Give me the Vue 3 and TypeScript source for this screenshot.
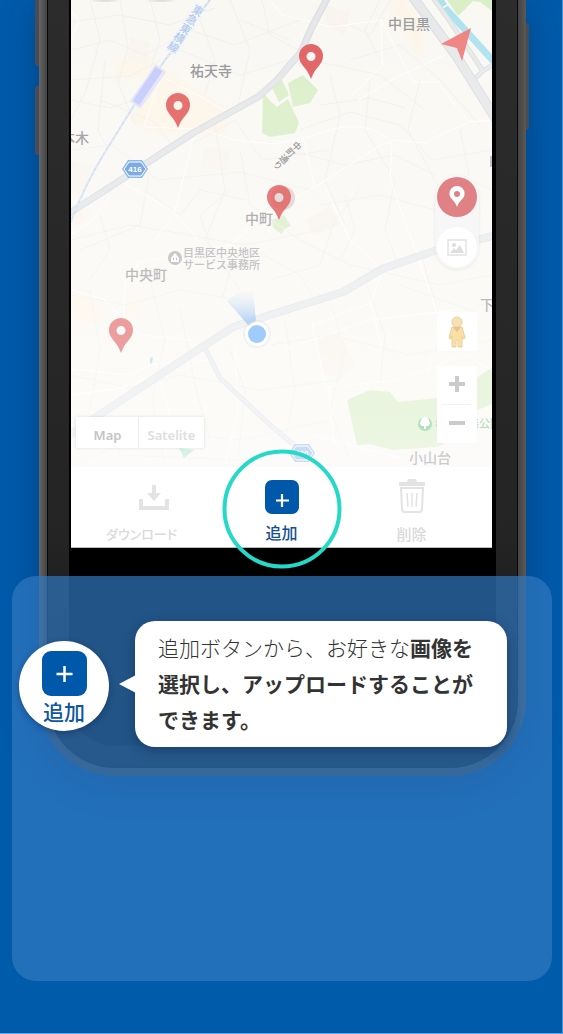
<script setup lang="ts">
interface Pin { x: number; y: number; opacity: number }
interface Label { text: string; x: number; y: number; size: number; color: string }

const pins: Pin[] = [
  { x: 178, y: 93, opacity: 0.88 },
  { x: 311, y: 44, opacity: 0.95 },
  { x: 279, y: 185, opacity: 0.82 },
  { x: 121, y: 318, opacity: 0.6 },
]

const labels: Label[] = [
  { text: '祐天寺', x: 190, y: 76, size: 14, color: '#999b9f' },
  { text: '中目黒', x: 388, y: 29, size: 14, color: '#999b9f' },
  { text: '本木', x: 61, y: 143, size: 14, color: '#a5a6a8' },
  { text: '中町', x: 245, y: 224, size: 14, color: '#b0b1b3' },
  { text: '中央町', x: 125, y: 280, size: 14, color: '#bbbcbd' },
  { text: '目黒区中央地区', x: 183, y: 257, size: 11, color: '#c3c4c5' },
  { text: 'サービス事務所', x: 183, y: 269, size: 11, color: '#c3c4c5' },
  { text: '下', x: 480, y: 310, size: 14, color: '#bbbcbd' },
  { text: '小山台', x: 409, y: 463, size: 14, color: '#cbcccd' },
  { text: '林試の森公園', x: 435, y: 428, size: 11, color: '#b9dfc1' },
]

const lanes: string[] = [
  'M71 50L110 40L145 55L190 30L235 45L300 20', 'M90 0L100 40L86 90L71 120', 'M120 0L128 48L118 82L135 125',
  'M71 80L130 76L180 50L240 75L290 60', 'M230 0L250 50L238 105', 'M262 0L270 35L320 62L380 75L425 110',
  'M71 150L112 145L158 180L240 172L310 190', 'M150 170L140 225L80 250', 'M190 145L235 120L262 160L330 150',
  'M215 125L225 190L205 240L240 290', 'M300 130L350 112L400 125L432 160L492 150', 'M330 75L340 115L325 180L345 225',
  'M370 80L365 130L395 180L385 230L400 270', 'M420 80L408 130L440 190', 'M320 205L380 195L435 210',
  'M71 240L130 225L190 235L245 245L320 230', 'M71 295L125 305L180 290L240 300', 'M90 290L100 350L90 410',
  'M150 280L165 340L152 400L165 466', 'M180 310L195 385L210 440', 'M230 350L245 390L238 460',
  'M71 375L130 388L180 375L260 390L340 380', 'M75 465L150 430L240 440L330 420', 'M285 320L295 390L285 440',
  'M330 300L345 350L330 410L350 460', 'M365 280L385 335L380 385', 'M270 345L330 335L410 355L492 340',
  'M270 280L320 265L335 220L360 190', 'M300 240L350 265L440 285L492 275', 'M420 250L440 320L430 365',
  'M460 130L470 180L492 190', 'M340 20L370 35L390 0', 'M350 60L400 45L440 80L480 125',
  'M240 150L250 205L300 240', 'M145 190L180 215L200 190L245 200', 'M100 100L155 122L175 150',
  'M255 250L300 275L320 310', 'M400 285L470 310L492 300', 'M110 405L120 455L240 460', 'M380 0L365 30L380 60',
  'M71 22L120 15L170 25L215 8', 'M150 0L160 40L150 70', 'M71 100L110 108L150 95', 'M105 60L98 130L108 150',
  'M200 20L215 60L205 95', 'M240 20L290 40', 'M320 105L370 98L405 108', 'M290 150L345 165L395 155L435 175',
  'M230 190L200 215L215 260', 'M100 215L110 250L90 280', 'M210 245L230 270L222 300', 'M345 195L355 230L340 260',
]

const avenues: string[] = [
  'M160 78L144 127L200 129L235 140L275 144L310 137Q360 115 390 140L425 143L450 130L470 122L492 120',
  'M166 79L205 99L229 113', 'M193 138L175 212L155 240', 'M120 181L174 212L198 240',
  'M270 0L282 15L333 27L381 20L413 82L438 82L457 108L470 122',
  'M381 20L382 65L352 95', 'M358 100L395 78L445 55', 'M303 137L315 187L266 214L230 245L140 262L125 282L123 330',
  'M315 187L382 144L392 142L390 180L410 235L440 320L428 373', 'M325 187L350 240L382 270L371 303L312 325L326 387L400 380L465 355L492 370',
  'M283 350L370 320L455 310', 'M371 303L382 350', 'M71 290L105 300L140 335L190 340L220 370',
  'M71 369L130 375L150 365L210 360', 'M235 340L238 410L225 466', 'M71 395L120 388L170 372', 'M160 382L175 432',
  'M310 434L400 458', 'M329 387L334 445', 'M71 10L79 22L71 40', 'M71 235L90 222L115 190',
]
</script>

<template>
  <main class="page">
    <section class="phone" aria-label="地図アプリ">
      <i class="side upper"></i><i class="side lower"></i><i class="side power"></i>
      <div class="bezel">
        <div class="screen">
          <div class="map">
            <svg class="canvas" viewBox="71 0 421 467" preserveAspectRatio="xMidYMid slice" role="img" aria-label="地図">
              <defs>
                <linearGradient id="beam" x1="0" y1="1" x2="0" y2="0">
                  <stop offset="0" stop-color="#a8ccf6" /><stop offset="1" stop-color="#d8e8f8" stop-opacity="0" />
                </linearGradient>
                <linearGradient id="haze" x1="0" y1="0" x2="0" y2="1">
                  <stop offset="0" stop-color="#fff" stop-opacity="0" /><stop offset="1" stop-color="#fff" stop-opacity=".5" />
                </linearGradient>
                <filter id="soft"><feGaussianBlur stdDeviation="3" /></filter>
              </defs>
              <rect x="71" width="421" height="467" fill="#faf8f3" />
              <g fill="#fdf5e8" filter="url(#soft)">
                <path d="M160 65L195 90L230 110L225 135L150 132L130 120Z" />
                <path d="M118 60L150 58L160 75L115 82Z" /><path d="M405 0L425 30L420 60L388 0Z" />
                <path d="M71 290L100 300L98 325L71 320Z" /><path d="M127 297L142 299L137 322L124 314Z" />
                <path d="M71 205L90 212L85 220L71 222Z" />
              </g>
              <g fill="#f9f4ee">
                <path d="M130 38L150 42L147 65L128 60Z" /><path d="M205 147L230 150L228 170L200 168Z" />
                <path d="M325 5L350 12L345 35L326 25Z" /><path d="M318 338L340 333L354 362L342 378L323 373Z" />
                <path d="M71 160L92 166L85 194L71 194Z" /><path d="M305 220L330 206L340 225L315 235Z" />
              </g>
              <g fill="#daeec8">
                <path d="M288 83L303 75L318 90L310 103L293 107Z" />
                <path d="M263 92L270 101L277 107L288 99L299 123L295 133L270 137L262 133Z" />
                <path d="M272 88L282 80L289 95L279 102Z" />
                <path d="M447 0L458 16L473 1L480 2L492 11V0Z" />
                <path d="M272 220L284 215L291 226L284 229L282 234L273 228Z" />
                <path d="M347 400L370 390L390 392L398 402L437 398L465 386L492 367V404L470 413L460 436L437 447L393 450L370 444L357 445Z" />
              </g>
              <g fill="none" stroke="#f0f1ee" stroke-width="1"><path v-for="d in lanes" :key="d" :d="d" /></g>
              <g fill="none" stroke="#fff" stroke-width="1" stroke-linejoin="round"><path v-for="d in avenues" :key="d" :d="d" /></g>
              <g fill="none" stroke-linejoin="round">
                <path d="M437 -4L447 10L496 64" stroke="#aee2ef" stroke-width="7" />
                <path d="M441 9L449 4" stroke="#f5faf8" stroke-width="2" />
                <path d="M433 -2L449 20L483 71L494 64M473 80L483 71" stroke="#dbe0e4" stroke-width="5" />
                <path d="M433 -2L449 20L483 71L494 64M473 80L483 71" stroke="#e7e9ea" stroke-width="3" />
                <path d="M412 -4L457 57L496 119" stroke="#d9dee3" stroke-width="10" />
                <path d="M412 -4L457 57L496 119" stroke="#e6e8e9" stroke-width="8" />
                <path d="M68 214L110 187L193 133L258 97L276 81L301 52L312 27L328 -3" stroke="#d8dde3" stroke-width="7" />
                <path d="M68 214L110 187L193 133L258 97L276 81L301 52L312 27L328 -3" stroke="#e4e6e7" stroke-width="5" />
                <path d="M66 438L93 419L190 355L233 327L270 315L343 292L382 269L437 250L496 235" stroke="#e0e4ea" stroke-width="8" />
                <path d="M66 438L93 419L190 355L233 327L270 315L343 292L382 269L437 250L496 235" stroke="#e8eaeb" stroke-width="6" />
                <path d="M205 348L220 378L270 425L294 445" stroke="#dfe3ea" stroke-width="5" />
                <path d="M205 348L220 378L270 425L294 445" stroke="#e9ebed" stroke-width="3" />
                <path d="M212 -3L163 63L133 107L102 157Q85 185 69 226" stroke="#cddaf1" stroke-width="2" />
                <path d="M212 -3L163 63L133 107L102 157Q85 185 69 226" stroke="#e9eef8" stroke-width="1" stroke-dasharray="3 3" />
                <path d="M135 105L161 68" stroke="#e2e4fa" stroke-width="13" /><path d="M136 103L159 69" stroke="#c4cafa" stroke-width="8" />
              </g>
              <path d="M150 358L153 357L152 363L150 364Z" fill="#a9dfe9" />
              <path d="M179 448L194 450L184 458Z" fill="#aee4d6" />
              <rect x="71" width="421" height="467" fill="url(#haze)" />
              <g font-weight="500">
                <text v-for="l in labels" :key="l.text" :x="l.x" :y="l.y" :font-size="l.size" :fill="l.color" class="place">{{ l.text }}</text>
                <text class="vertical place" font-size="9" fill="#999" transform="translate(300 143) rotate(45)">中町通り</text>
                <text class="vertical place" font-size="11" fill="#b3cbec" stroke="#f3f6fa" stroke-width="3" paint-order="stroke" transform="translate(201 6) rotate(34)">東急東横線</text>
              </g>
              <g transform="translate(135 169)">
                <path d="M-7 -9H7L13 0L7 9H-7L-13 0Z" fill="#8fb8eb" /><path d="M-6 -7H6L11 0L6 7H-6L-11 0Z" fill="#7dabe5" stroke="#fff" />
                <text y="3" text-anchor="middle" font-size="8" font-weight="700" fill="#fff">416</text>
              </g>
              <g transform="translate(302 453)" opacity=".6">
                <path d="M-7 -9H7L13 0L7 9H-7L-13 0Z" fill="#a9c7f0" /><path d="M-6 -7H6L11 0L6 7H-6L-11 0Z" fill="#aac8f0" stroke="#fff" />
                <text y="3" text-anchor="middle" font-size="8" font-weight="700" fill="#fff">420</text>
              </g>
              <circle cx="175" cy="258" r="7" fill="#c9c9c9" /><path d="M171 258L175 253L179 258V262H171Z" fill="#fff" /><path d="M173 258h1v2h-1zM176 258h1v2h-1z" fill="#bbb" />
              <circle cx="425" cy="424" r="7" fill="#b5dfbd" /><path d="M424 429V426H422A3 3 0 0 1 421 421A4 4 0 0 1 429 421A3 3 0 0 1 428 426H426V429Z" fill="#fff" />
              <ellipse cx="105" cy="-2" rx="12" ry="3" fill="#777" opacity=".4" filter="url(#soft)" /><ellipse cx="161" cy="-2" rx="12" ry="3" fill="#777" opacity=".4" filter="url(#soft)" />
              <path d="M491 156V167" stroke="#c3c4c5" stroke-width="2" />
              <circle cx="283" cy="198" r="12" fill="#d5c4c2" opacity=".6" />
              <path v-for="p in pins" :key="p.x" :transform="`translate(${p.x} ${p.y})`" :opacity="p.opacity" d="M0 0A12 12 0 0 1 12 12C12 21 4 23 0 35C-4 23 -12 21 -12 12A12 12 0 0 1 0 0ZM0 8A4.500 4.500 0 1 0 0 17A4.500 4.500 0 1 0 0 8Z" fill="#e25f60" fill-rule="evenodd" />
              <path d="M471 28L441 44L457 48L462 61Z" fill="#ef8684" />
              <path d="M227 301Q238 290 253 289L256 321L249 326Z" fill="url(#beam)" />
              <circle cx="257" cy="334" r="14" fill="#dfe3e8" opacity=".35" /><circle cx="257" cy="334" r="12" fill="#fff" /><circle cx="257" cy="334" r="9" fill="#a0ccfb" />
            </svg>
            <div class="capsule">
              <button class="round pinned" aria-label="ピン"><svg width="16" height="22" viewBox="0 0 16 22"><path d="M8 0A7.500 7.500 0 0 1 15.500 8C15.500 13 10 14 8 21C6 14 .5 13 .5 8A7.500 7.500 0 0 1 8 0ZM8 5A3 3 0 1 0 8 11A3 3 0 1 0 8 5Z" fill="#fff" fill-rule="evenodd" /></svg></button>
              <button class="round" aria-label="画像"><svg width="20" height="17" viewBox="0 0 20 17"><path d="M1 1H19V16H1Z" fill="none" stroke="#e3e3e3" stroke-width="1.500" /><circle cx="7" cy="6" r="2" fill="#dedede" /><path d="M3 14L7 9L9 11L13 6L17 14Z" fill="#dedede" /></svg></button>
            </div>
            <button class="pegman" aria-label="ストリートビュー"><svg width="18" height="32" viewBox="0 0 18 32"><path d="M4 11H14L17 22L15 23L14 20V31H10V24H8V31H4V20L3 23L1 22Z" fill="#fae0a8" stroke="#e8cf98" /><circle cx="9" cy="6" r="5" fill="#fae0b5" stroke="#ebcf9f" /><path d="M5 11H13L9 16Z" fill="#ecc08e" /></svg></button>
            <div class="zoomer">
              <button aria-label="拡大"><svg width="16" height="16" viewBox="0 0 16 16"><path d="M6 0H10V6H16V10H10V16H6V10H0V6H6Z" fill="#cbcbcb" /></svg></button>
              <button aria-label="縮小"><svg width="16" height="16" viewBox="0 0 16 16"><path d="M0 6H16V10H0Z" fill="#cbcbcb" /></svg></button>
            </div>
            <div class="kind"><button class="on">Map</button><button>Satelite</button></div>
          </div>
          <nav class="tabs">
            <button class="tab">
              <svg width="54" height="34" viewBox="0 0 54 34"><path d="M37 6H41V14H46L39 22L32 14H37Z M24 20H28V27H50V20H54V31H24Z" fill="#e3e3e3" /></svg>
              <span class="narrow">ダウンロード</span>
            </button>
            <button class="tab active">
              <svg width="34" height="34" viewBox="0 0 34 34"><rect width="34" height="34" rx="7" fill="#0058aa" /><path d="M17 14V27M11 20.500H24" stroke="#fff" stroke-width="2.200" /></svg>
              <span>追加</span>
            </button>
            <button class="tab">
              <svg width="28" height="34" viewBox="0 0 28 34"><path d="M1 4Q1 3 2 3H9L10 0H18L19 3H26Q27 3 27 4V7H1Z" fill="#e3e3e3" /><path d="M3 9L4 30Q4 33 7 33H21Q24 33 24 30L25 9Z" fill="none" stroke="#e3e3e3" stroke-width="2" /><path d="M9 14L10 28M14 14V28M19 14L18 28" fill="none" stroke="#e3e3e3" stroke-width="1.500" /></svg>
              <span>削除</span>
            </button>
          </nav>
        </div>
      </div>
    </section>

    <section class="guide">
      <div class="badge">
        <svg width="45" height="45" viewBox="0 0 45 45"><rect width="45" height="45" rx="9" fill="#0058aa" /><path d="M22.500 15V31M14.500 23H30.500" stroke="#fff" stroke-width="2.500" /></svg>
        <span>追加</span>
      </div>
      <p class="bubble">追加ボタンから、お好きな<b>画像を</b><br><b>選択し、アップロードすることが</b><br><b>できます。</b></p>
    </section>
  </main>
</template>

<style>
body { background: #005bab; }
</style>

<style scoped>
.page {
  box-sizing: border-box;
  min-height: 100vh;
  padding-bottom: 52px;
  overflow: hidden;
  background: #005bab;
  border-right: 1px solid #4d96d6;
  border-bottom: 1px solid #64a8e6;
  font-family: "Liberation Sans", "Noto Sans CJK JP", sans-serif;
}
button {
  margin: 0;
  padding: 0;
  border: 0;
  background: none;
  font: inherit;
  color: inherit;
}
svg { display: block; flex: none; }
.phone {
  position: relative;
  margin: 0 36px 0 39px;
  padding: 0 8px 8px;
  border-radius: 0 0 76px 76px;
  background: linear-gradient(90deg, #666 0, #444 8px, #444 calc(100% - 8px), #5c5854 100%);
  box-shadow: 0 8px 36px rgba(0, 20, 60, .35);
}
.side { position: absolute; width: 4px; background: #4b4b55; }
.upper { left: -4px; top: 0; height: 66px; border-radius: 0 0 0 3px; }
.lower { left: -4px; top: 86px; height: 69px; border-radius: 3px 0 0 3px; }
.power { right: -3px; top: 23px; height: 107px; width: 3px; border-radius: 0 3px 3px 0; }
.bezel {
  padding: 0 21px 21px;
  border: solid #080808;
  border-width: 0 1px 1px;
  border-radius: 0 0 68px 68px;
  background: linear-gradient(#2c2c2c, #242424 70%, #101010);
}
.screen {
  padding: 0 4px 198px 2px;
  border-radius: 0 0 46px 46px;
  background: #000;
}
.map { position: relative; aspect-ratio: 421 / 467; overflow: hidden; }
.canvas { width: 100%; height: 100%; }
.place { font-family: "Noto Sans CJK JP", sans-serif; }
.vertical { writing-mode: vertical-rl; }
.capsule {
  position: absolute;
  right: 13px;
  top: 175px;
  display: flex;
  flex-direction: column;
  gap: 10px;
  padding: 2px;
  border-radius: 24px;
  background: rgba(246, 246, 247, .8);
  box-shadow: 0 1px 3px rgba(0, 0, 0, .08);
}
.round {
  display: grid;
  place-items: center;
  width: 40px;
  height: 40px;
  border-radius: 50%;
  background: #fff;
}
.pinned { background: #e08285; }
.pegman, .zoomer { position: absolute; right: 15px; width: 40px; background: #fff; border-radius: 2px; }
.pegman { top: 312px; height: 39px; display: grid; place-items: center; }
.zoomer { top: 366px; }
.zoomer button { display: grid; place-items: center; width: 100%; height: 36px; }
.zoomer button + button { height: 41px; background: linear-gradient(#f2f2f2, #f2f2f2) 5px 2px / 29px 1px no-repeat; }
.kind {
  position: absolute;
  left: 5px;
  bottom: 19px;
  display: flex;
  background: #fff;
  box-shadow: 0 0 3px rgba(0, 0, 0, .12);
}
.kind button {
  width: 65px;
  height: 31px;
  padding-top: 5px;
  color: #dedede;
  font: 600 13px "Noto Sans", sans-serif;
}
.kind .on { width: 63px; color: #c4c4c4; box-shadow: inset -1px 0 #ececec; }
.tabs {
  display: grid;
  grid-template-columns: 141fr 139fr 121fr 20fr;
  height: 81px;
  background: #fff;
  box-shadow: inset 0 -1px #bbb;
}
.tab {
  position: relative;
  display: flex;
  flex-direction: column;
  align-items: center;
  gap: 9px;
  padding-top: 12px;
  color: #dadada;
  font: 500 15px/24px "Noto Sans CJK JP", sans-serif;
  font-feature-settings: "palt";
}
.narrow { font-size: 13px; }
.active { color: #14508f; padding-top: 13px; gap: 6px; font-size: 16px; }
.active::after {
  content: "";
  position: absolute;
  left: 50%;
  top: 50%;
  width: 111px;
  height: 111px;
  border: 4px solid #25d9c8;
  border-radius: 50%;
  transform: translate(-50%, -50%);
  margin-top: 1px;
}
.guide {
  position: relative;
  display: flex;
  align-items: flex-start;
  gap: 26px;
  box-sizing: border-box;
  min-height: 405px;
  margin: -200px 10px 0 12px;
  padding: 45px 45px 45px 7px;
  border-radius: 24px;
  background: rgba(49, 120, 193, .7);
}
.badge {
  display: flex;
  flex: none;
  flex-direction: column;
  align-items: center;
  box-sizing: border-box;
  width: 90px;
  height: 90px;
  margin-top: 20px;
  padding-top: 10px;
  border-radius: 50%;
  background: #fff;
  box-shadow: 0 2px 6px rgba(0, 20, 60, .35);
  color: #0f58a0;
  font: 500 21px/30px "Noto Sans CJK JP", sans-serif;
}
.bubble {
  position: relative;
  flex: 1;
  margin: 0;
  padding: 8px 0 10px 23px;
  border-radius: 20px;
  background: #fff;
  box-shadow: 0 4px 12px rgba(0, 20, 60, .35);
  color: #333;
  font: 300 21px/36px "Noto Sans CJK JP", sans-serif;
}
.bubble::before {
  content: "";
  position: absolute;
  left: -16px;
  top: 54px;
  border: solid transparent;
  border-width: 9px 17px 9px 0;
  border-right-color: #fff;
}
.bubble b { font-weight: 700; }
</style>
